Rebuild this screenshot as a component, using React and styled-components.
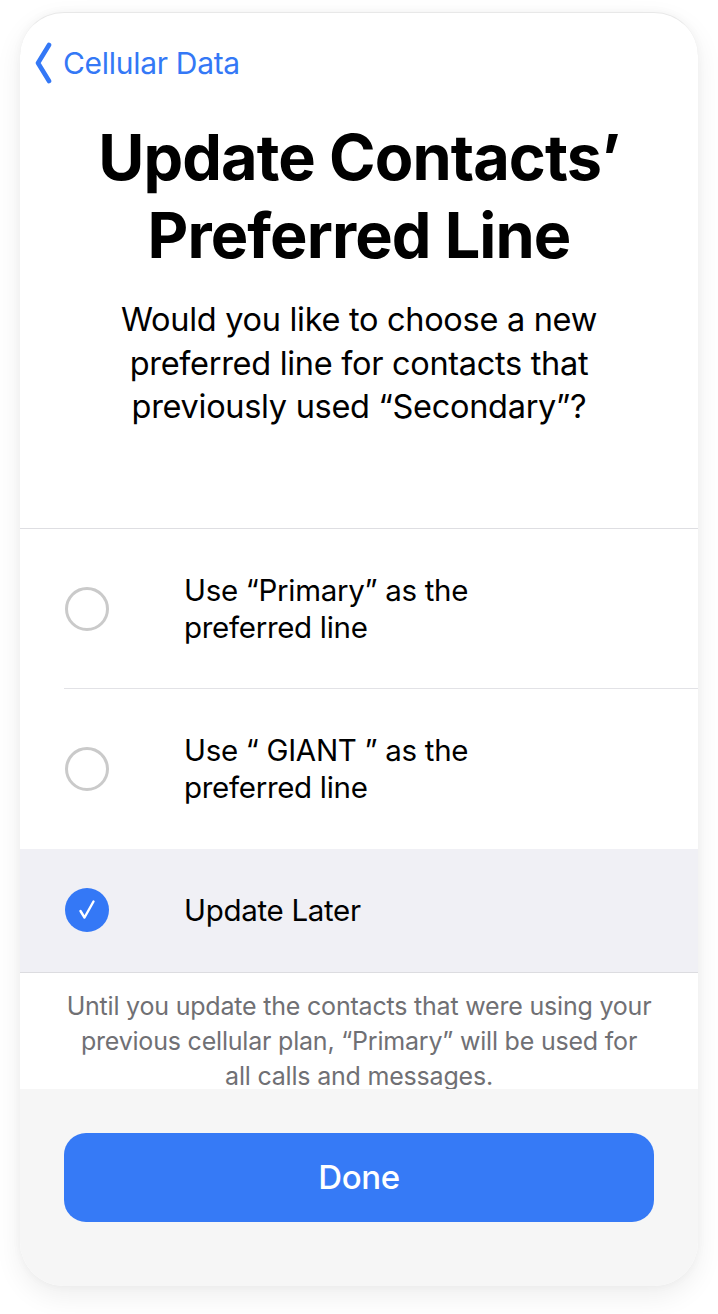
import React, { useState } from "react";
import styled, { createGlobalStyle } from "styled-components";

const Global = createGlobalStyle`
  html, body {
    margin: 0;
    padding: 0;
    background: #ffffff;
    font-family: Inter, "Noto Sans", "Liberation Sans", sans-serif;
    -webkit-font-smoothing: antialiased;
  }
`;

const Page = styled.div`
  width: 718px;
  height: 1314px;
  padding-top: 12px;
  box-sizing: border-box;
`;

const Card = styled.div`
  margin: 0 20px;
  height: 1273px;
  border-radius: 44px;
  overflow: hidden;
  background: #ffffff;
  display: flex;
  flex-direction: column;
  border-top: 1px solid #e8e8e8;
  box-shadow: 0 10px 28px rgba(0, 0, 0, 0.07), 0 0 10px rgba(0, 0, 0, 0.04);
`;

const NavBar = styled.button`
  display: flex;
  align-items: center;
  gap: 7px;
  height: 40px;
  margin: 30px 0 0 14px;
  padding: 0;
  border: none;
  background: none;
  color: #3478f6;
  font-family: inherit;
  font-size: 30px;
  letter-spacing: -0.3px;
  cursor: pointer;
  align-self: flex-start;
`;

const Title = styled.h1`
  margin: 35px 0 0;
  text-align: center;
  font-size: 63px;
  line-height: 78px;
  font-weight: 700;
  letter-spacing: -0.9px;
  color: #000;
`;

const Subtitle = styled.p`
  margin: 24px 0 0;
  padding: 0 40px;
  text-align: center;
  font-size: 32.5px;
  line-height: 43.5px;
  font-weight: 400;
  letter-spacing: -0.3px;
  color: #000;
`;

const List = styled.div`
  margin-top: 99px;
  border-top: 1px solid #dedee2;
  border-bottom: 1px solid #dcdce0;
`;

const Row = styled.div`
  display: flex;
  align-items: center;
  height: ${(p) => p.$height}px;
  padding-left: 45px;
  background: ${(p) => (p.$selected ? "#f0f0f5" : "#ffffff")};
  cursor: pointer;
  position: relative;
  & + &::before {
    content: "";
    position: absolute;
    top: -1px;
    left: 44px;
    right: 0;
    height: 1px;
    background: #e2e2e6;
  }
`;

const Radio = styled.span`
  flex: none;
  width: 44px;
  height: 44px;
  box-sizing: border-box;
  border-radius: 50%;
  border: ${(p) => (p.$checked ? "none" : "3px solid #cacaca")};
  background: ${(p) => (p.$checked ? "#3478f6" : "transparent")};
  display: flex;
  align-items: center;
  justify-content: center;
`;

const RowLabel = styled.span`
  margin-left: 75px;
  font-size: 29.5px;
  line-height: 37px;
  letter-spacing: -0.3px;
  color: #000;
`;

const Note = styled.p`
  margin: 0;
  flex: none;
  height: 116px;
  box-sizing: border-box;
  padding: 16px 30px 0;
  text-align: center;
  font-size: 25px;
  line-height: 35px;
  letter-spacing: -0.2px;
  color: #707074;
`;

const Footer = styled.div`
  flex: 1;
  background: #f6f6f6;
  padding: 44px 44px 0;
`;

const DoneButton = styled.button`
  width: 100%;
  height: 89px;
  border: none;
  border-radius: 22px;
  background: #367af6;
  color: #ffffff;
  font-family: inherit;
  font-size: 33px;
  font-weight: 500;
  letter-spacing: -0.4px;
  cursor: pointer;
`;

const Chevron = () => (
  <svg width="22" height="42" viewBox="0 0 22 42">
    <polyline
      points="15,3 4,21 15,39"
      fill="none"
      stroke="#3478f6"
      strokeWidth="4.6"
      strokeLinecap="round"
      strokeLinejoin="round"
    />
  </svg>
);

const Check = () => (
  <svg width="24" height="24" viewBox="0 0 24 24">
    <polyline
      points="5.5,13 9.5,19.5 18.5,3.5"
      fill="none"
      stroke="#ffffff"
      strokeWidth="2.4"
      strokeLinecap="round"
      strokeLinejoin="round"
    />
  </svg>
);

const options = [
  { id: "primary", label: ["Use \u201cPrimary\u201d as the", "preferred line"], height: 160 },
  { id: "giant", label: ["Use \u201c GIANT \u201d as the", "preferred line"], height: 160 },
  { id: "later", label: ["Update Later"], height: 123 },
];

export default function App() {
  const [selected, setSelected] = useState("later");
  return (
    <>
      <Global />
      <Page>
        <Card>
          <NavBar>
            <Chevron />
            Cellular Data
          </NavBar>
          <Title>
            Update Contacts’
            <br />
            Preferred Line
          </Title>
          <Subtitle>
            Would you like to choose a new
            <br />
            preferred line for contacts that
            <br />
            previously used “Secondary”?
          </Subtitle>
          <List>
            {options.map((o) => (
              <Row
                key={o.id}
                $height={o.height}
                $selected={selected === o.id}
                onClick={() => setSelected(o.id)}
              >
                <Radio $checked={selected === o.id}>
                  {selected === o.id && <Check />}
                </Radio>
                <RowLabel>
                  {o.label.map((l, i) => (
                    <React.Fragment key={i}>
                      {i > 0 && <br />}
                      {l}
                    </React.Fragment>
                  ))}
                </RowLabel>
              </Row>
            ))}
          </List>
          <Note>
            Until you update the contacts that were using your
            <br />
            previous cellular plan, “Primary” will be used for
            <br />
            all calls and messages.
          </Note>
          <Footer>
            <DoneButton>Done</DoneButton>
          </Footer>
        </Card>
      </Page>
    </>
  );
}
